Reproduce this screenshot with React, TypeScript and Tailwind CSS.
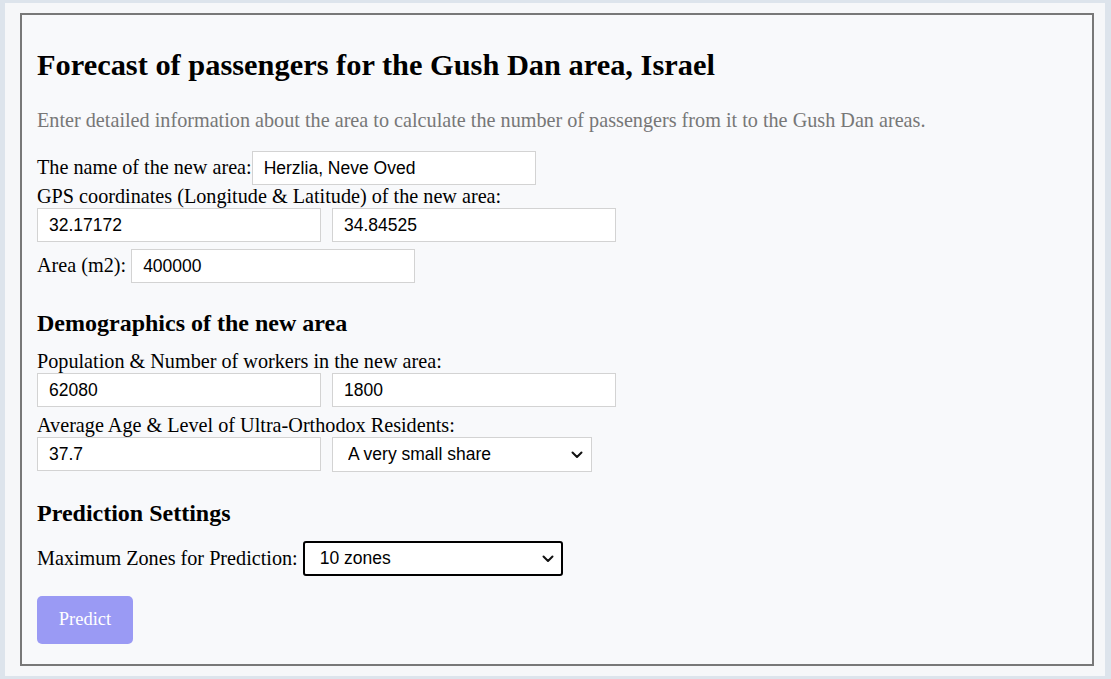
import React, { useState } from 'react';

const serif = { fontFamily: '"Liberation Serif", "Times New Roman", serif' };
const sans = { fontFamily: '"Liberation Sans", Arial, sans-serif' };

const inputCls =
  'h-[34px] w-[284px] border border-[#d3d3d3] bg-white px-[11px] text-[17.5px] text-black outline-none';

const Chevron = () => (
  <svg
    className="pointer-events-none absolute right-[9px] top-1/2 -translate-y-1/2"
    width="12"
    height="8"
    viewBox="0 0 12 8"
    fill="none"
  >
    <path d="M1.5 1.5 L6 6 L10.5 1.5" stroke="#111" strokeWidth="2" strokeLinecap="round" strokeLinejoin="round" />
  </svg>
);

interface SelectProps {
  value: string;
  options: string[];
  onChange: (v: string) => void;
  strong?: boolean;
}

const Select: React.FC<SelectProps> = ({ value, options, onChange, strong }) => (
  <div className="relative">
    <select
      value={value}
      onChange={(e) => onChange(e.target.value)}
      style={sans}
      className={`h-[35px] w-[260px] appearance-none bg-white pl-[15px] pr-8 text-[17.5px] text-black outline-none ${
        strong ? 'rounded-[3px] border-2 border-black' : 'border border-[#d3d3d3]'
      }`}
    >
      {options.map((o) => (
        <option key={o}>{o}</option>
      ))}
    </select>
    <Chevron />
  </div>
);

export default function App() {
  const [name, setName] = useState('Herzlia, Neve Oved');
  const [lon, setLon] = useState('32.17172');
  const [lat, setLat] = useState('34.84525');
  const [area, setArea] = useState('400000');
  const [pop, setPop] = useState('62080');
  const [workers, setWorkers] = useState('1800');
  const [age, setAge] = useState('37.7');
  const [orthodox, setOrthodox] = useState('A very small share');
  const [zones, setZones] = useState('10 zones');

  return (
    <div className="h-[679px] w-[1111px] overflow-hidden bg-[#dde4ec] pl-[5px] pt-[3px]">
      <div className="h-[673px] w-[1100px] bg-[#f6f7f9] pl-[15px] pt-[10px]">
        <div className="h-[653px] w-[1074px] border-2 border-[#787878] bg-[#f8f9fb] px-[15px]" style={serif}>
          <h1 className="mt-[33px] text-[30.4px] font-bold leading-[34px] text-black">
            Forecast of passengers for the Gush Dan area, Israel
          </h1>

          <p className="mt-[27px] text-[20.2px] leading-[23px] text-[#777]">
            Enter detailed information about the area to calculate the number of passengers from it to the Gush Dan
            areas.
          </p>

          {/* Area details */}
          <div className="mt-[19px] flex items-baseline text-[20.2px] text-black">
            <label className="leading-[23px]">The name of the new area:</label>
            <input style={sans} className={inputCls} value={name} onChange={(e) => setName(e.target.value)} />
          </div>

          <div className="text-[20.2px] leading-[23px] text-black">GPS coordinates (Longitude &amp; Latitude) of the new area:</div>
          <div className="flex gap-[11px]">
            <input style={sans} className={inputCls} value={lon} onChange={(e) => setLon(e.target.value)} />
            <input style={sans} className={inputCls} value={lat} onChange={(e) => setLat(e.target.value)} />
          </div>

          <div className="mt-[7px] flex items-baseline text-[20.2px] text-black">
            <label className="leading-[23px]">Area (m2):</label>
            <input style={sans} className={inputCls + ' ml-[5px]'} value={area} onChange={(e) => setArea(e.target.value)} />
          </div>

          {/* Demographics */}
          <h2 className="mt-[26px] text-[24px] font-bold leading-[28px] text-black">Demographics of the new area</h2>

          <div className="mt-[13px] text-[20.2px] leading-[23px] text-black">Population &amp; Number of workers in the new area:</div>
          <div className="flex gap-[11px]">
            <input style={sans} className={inputCls} value={pop} onChange={(e) => setPop(e.target.value)} />
            <input style={sans} className={inputCls} value={workers} onChange={(e) => setWorkers(e.target.value)} />
          </div>

          <div className="mt-[7px] text-[20.2px] leading-[23px] text-black">Average Age &amp; Level of Ultra-Orthodox Residents:</div>
          <div className="flex gap-[11px]">
            <input style={sans} className={inputCls} value={age} onChange={(e) => setAge(e.target.value)} />
            <Select
              value={orthodox}
              onChange={setOrthodox}
              options={['A very small share', 'A small share', 'A medium share', 'A large share', 'A very large share']}
            />
          </div>

          {/* Prediction settings */}
          <h2 className="mt-[27px] text-[24px] font-bold leading-[28px] text-black">Prediction Settings</h2>

          <div className="mt-[14px] flex items-center gap-[5px] text-[20.2px] text-black">
            <label className="leading-[23px]">Maximum Zones for Prediction:</label>
            <Select
              value={zones}
              onChange={setZones}
              strong
              options={['5 zones', '10 zones', '15 zones', '20 zones']}
            />
          </div>

          <button className="mt-[20px] h-[48px] w-[96px] rounded-[5px] bg-[#9a9af4] text-[18.5px] text-white" style={serif}>
            Predict
          </button>
        </div>
      </div>
    </div>
  );
}
